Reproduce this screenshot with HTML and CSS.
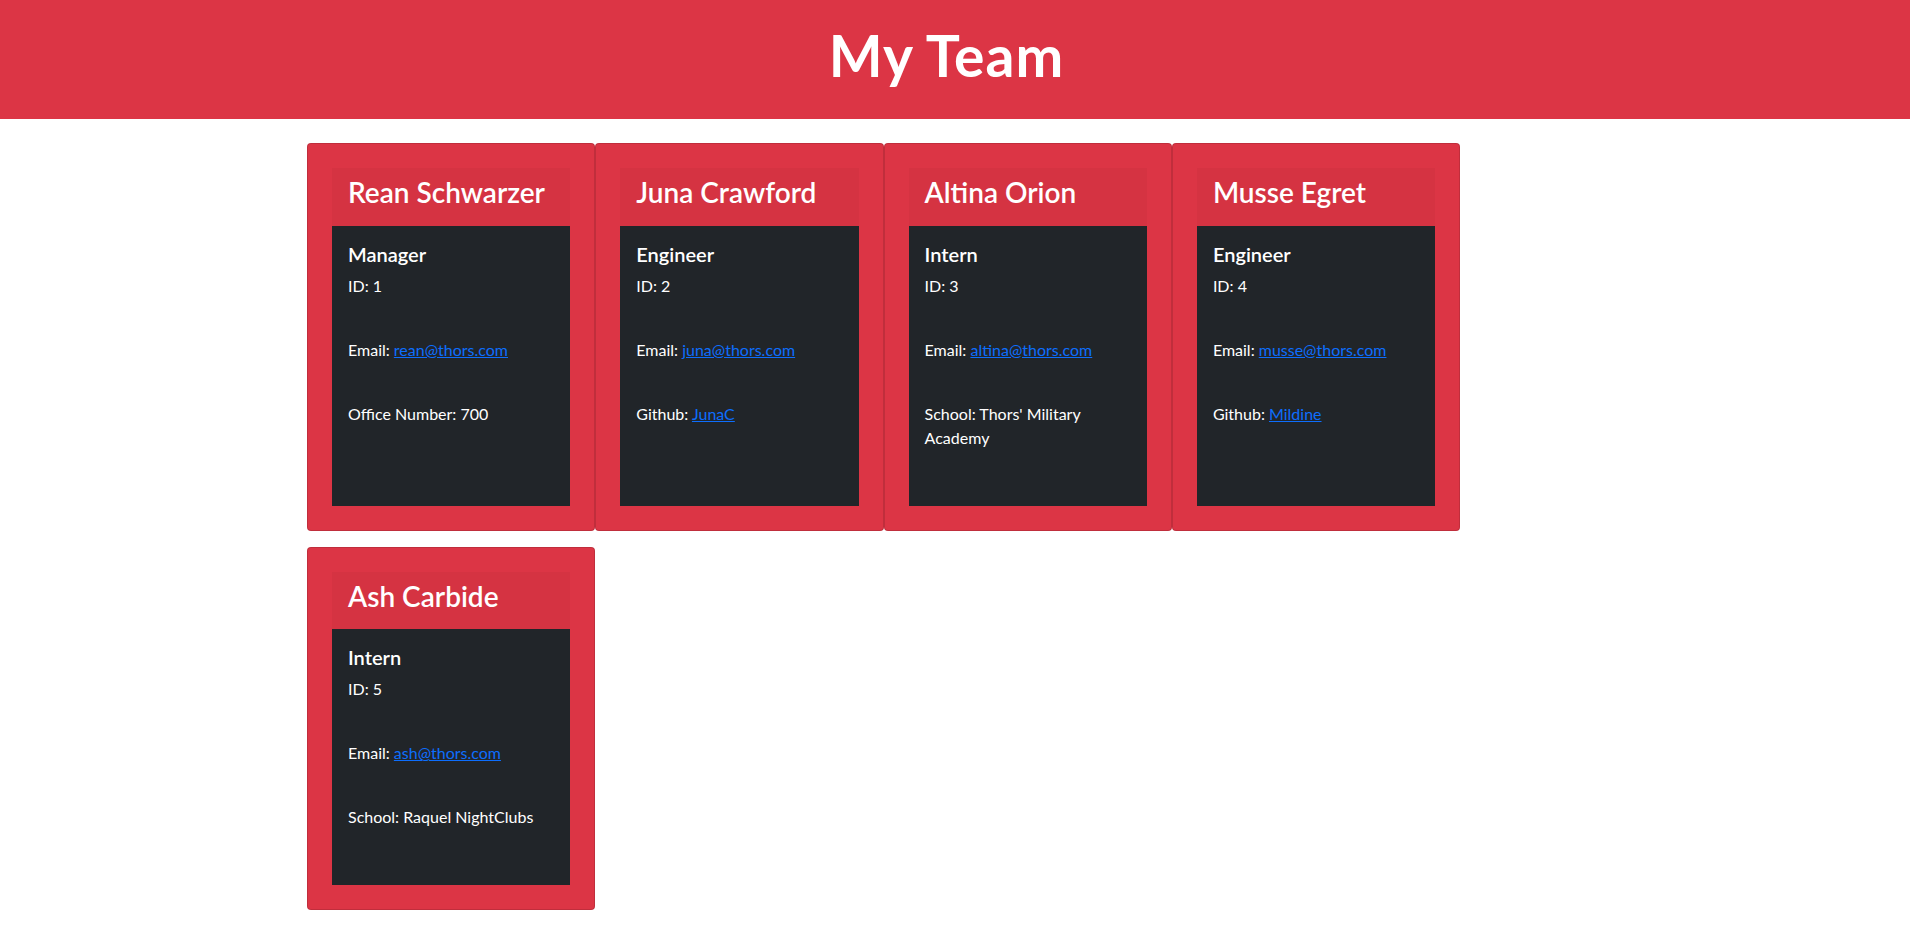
FILE: index.html
```html
<!DOCTYPE html>
<html lang="en">
<head>
<meta charset="UTF-8">
<title>My Team</title>
<link rel="stylesheet" href="styles.css">
</head>
<body>
<header class="hero">
  <h1 class="hero-title">My Team</h1>
</header>
<main class="team">
  <div class="team-grid">
    <article class="member">
      <div class="member-inner">
        <div class="member-head"><h3 class="member-name">Rean Schwarzer</h3></div>
        <div class="member-body">
          <h5 class="member-role">Manager</h5>
          <p class="field">ID: 1</p>
          <p class="field">Email: <a href="mailto:rean@thors.com">rean@thors.com</a></p>
          <p class="field">Office Number: 700</p>
        </div>
      </div>
    </article>
    <article class="member">
      <div class="member-inner">
        <div class="member-head"><h3 class="member-name">Juna Crawford</h3></div>
        <div class="member-body">
          <h5 class="member-role">Engineer</h5>
          <p class="field">ID: 2</p>
          <p class="field">Email: <a href="mailto:juna@thors.com">juna@thors.com</a></p>
          <p class="field">Github: <a href="#">JunaC</a></p>
        </div>
      </div>
    </article>
    <article class="member">
      <div class="member-inner">
        <div class="member-head"><h3 class="member-name">Altina Orion</h3></div>
        <div class="member-body">
          <h5 class="member-role">Intern</h5>
          <p class="field">ID: 3</p>
          <p class="field">Email: <a href="mailto:altina@thors.com">altina@thors.com</a></p>
          <p class="field">School: Thors' Military Academy</p>
        </div>
      </div>
    </article>
    <article class="member">
      <div class="member-inner">
        <div class="member-head"><h3 class="member-name">Musse Egret</h3></div>
        <div class="member-body">
          <h5 class="member-role">Engineer</h5>
          <p class="field">ID: 4</p>
          <p class="field">Email: <a href="mailto:musse@thors.com">musse@thors.com</a></p>
          <p class="field">Github: <a href="#">Mildine</a></p>
        </div>
      </div>
    </article>
    <article class="member">
      <div class="member-inner">
        <div class="member-head"><h3 class="member-name">Ash Carbide</h3></div>
        <div class="member-body">
          <h5 class="member-role">Intern</h5>
          <p class="field">ID: 5</p>
          <p class="field">Email: <a href="mailto:ash@thors.com">ash@thors.com</a></p>
          <p class="field">School: Raquel NightClubs</p>
        </div>
      </div>
    </article>
  </div>
</main>
</body>
</html>
```

FILE: styles.css
```css
* {
  box-sizing: border-box;
}

html, body {
  margin: 0;
  padding: 0;
}

body {
  font-family: Lato, "Noto Sans", "Liberation Sans", sans-serif;
  font-size: 16px;
  line-height: 1.5;
  color: #212529;
  background: #ffffff;
}

.hero {
  background: #dc3545;
  height: 119px;
  padding: 21px 17px 0 0;
  text-align: center;
}

.hero-title {
  margin: 0;
  font-size: 57px;
  line-height: 1.2;
  font-weight: 700;
  letter-spacing: 1px;
  color: #ffffff;
}

.team {
  width: 1320px;
  margin: 24px auto 0;
  padding: 0 12px 36px;
}

.team-grid {
  display: flex;
  flex-wrap: wrap;
  row-gap: 16px;
}

.member {
  width: 288.3px;
  display: flex;
  flex-direction: column;
  background: #dc3545;
  border: 1px solid rgba(0, 0, 0, 0.125);
  border-radius: 4px;
  padding: 24px;
}

.member-inner {
  flex: 1;
  display: flex;
  flex-direction: column;
}

.member-head {
  background: #d53342;
  padding: 8px 16px;
}

.member-name {
  margin: 0 0 8px;
  font-size: 28px;
  line-height: 1.2;
  font-weight: 600;
  color: #ffffff;
}

.member-body {
  flex: 1;
  background: #212529;
  padding: 16px;
  color: #ffffff;
}

.member-role {
  margin: 0 0 8px;
  font-size: 20px;
  line-height: 1.2;
  font-weight: 600;
}

.field {
  margin: 0 0 40px;
}

.field a {
  color: #0d6efd;
  text-decoration: underline;
}
```
